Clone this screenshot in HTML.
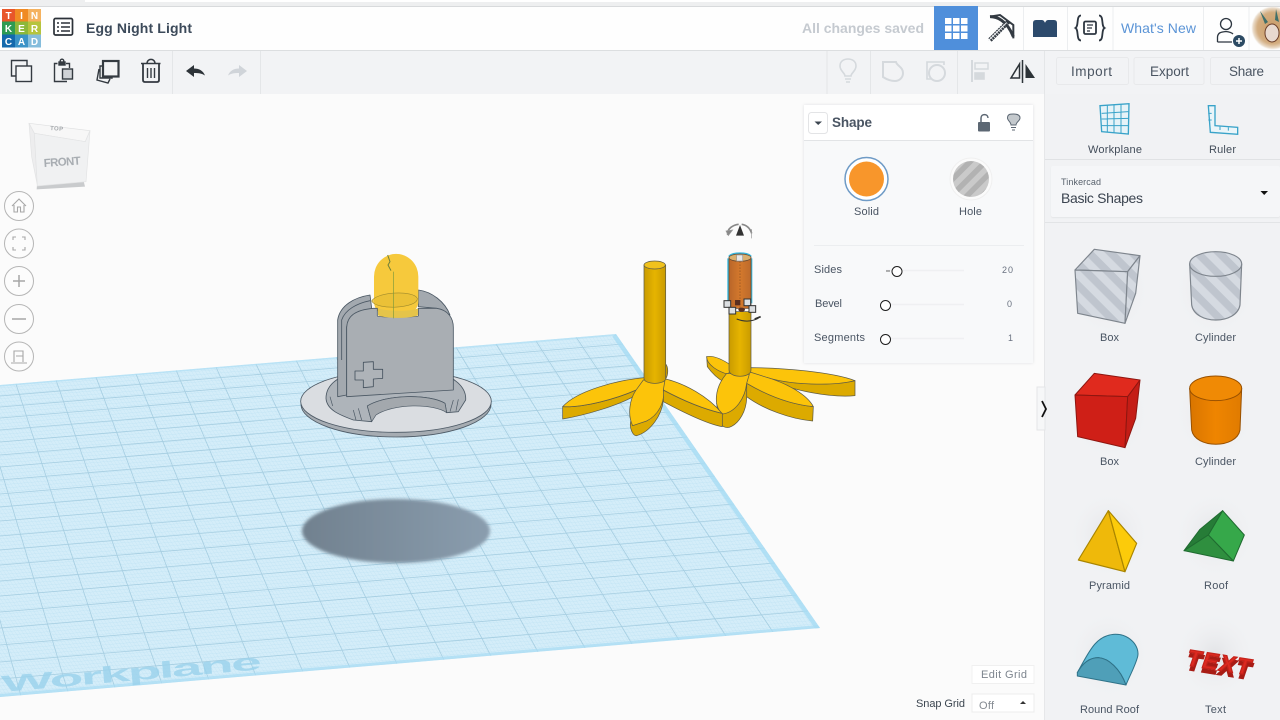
<!DOCTYPE html>
<html>
<head>
<meta charset="utf-8">
<title>Egg Night Light</title>
<style>
html,body{margin:0;padding:0;width:1280px;height:720px;overflow:hidden;background:#fbfbfb}
svg{position:absolute;left:0;top:0;display:block}
text{font-family:"Liberation Sans",sans-serif;fill:#4a5563;font-size:12px}
</style>
</head>
<body>
<svg width="1280" height="720" viewBox="0 0 1280 720" xmlns="http://www.w3.org/2000/svg">
<defs>
<pattern id="mesh" width="3.4" height="3.4" patternUnits="userSpaceOnUse" patternTransform="matrix(1 -0.085 0.66 1 0 0)">
<rect width="3.4" height="3.4" fill="#d4edf9"/>
<path d="M0 0H3.4M0 0V3.4" stroke="#bde1f3" stroke-width=".6"/>
</pattern>
<pattern id="stripe" width="46" height="46" patternUnits="userSpaceOnUse" patternTransform="rotate(-45)">
<rect width="46" height="46" fill="#bfc5ce"/>
<rect width="23" height="46" fill="#d5dae1"/>
</pattern>
<pattern id="stripe2" width="11" height="11" patternUnits="userSpaceOnUse" patternTransform="rotate(45)">
<rect width="11" height="11" fill="#b2b2b2"/>
<rect width="5.500" height="11" fill="#cacaca"/>
</pattern>
<clipPath id="wp"><polygon points="0,385 616,334 820,628 0,697"/></clipPath>
<linearGradient id="stem" x1="0" x2="1" y1="0" y2="0"><stop offset="0" stop-color="#c99b00"/><stop offset=".5" stop-color="#e6b400"/><stop offset="1" stop-color="#c99b00"/></linearGradient>
<linearGradient id="orange" x1="0" x2="1" y1="0" y2="0"><stop offset="0" stop-color="#b9662a"/><stop offset=".5" stop-color="#d4792c"/><stop offset="1" stop-color="#bd6a2c"/></linearGradient>
<linearGradient id="cylg" x1="0" x2="1" y1="0" y2="0"><stop offset="0" stop-color="#d97500"/><stop offset=".5" stop-color="#ef8500"/><stop offset="1" stop-color="#e07b00"/></linearGradient>
<radialGradient id="halo"><stop offset="0" stop-color="#e2e3e6"/><stop offset="1" stop-color="#f1f2f4" stop-opacity="0"/></radialGradient>
<linearGradient id="shad" x1="0" x2="1" y1="0" y2="0"><stop offset="0" stop-color="#71818f"/><stop offset="1" stop-color="#8a9dae"/></linearGradient>
<radialGradient id="ava"><stop offset="0" stop-color="#c99c68"/><stop offset=".75" stop-color="#d3ad80"/><stop offset="1" stop-color="#efe6da"/></radialGradient>
<filter id="b1"><feGaussianBlur stdDeviation=".5"/></filter>
<filter id="b2"><feGaussianBlur stdDeviation="1.5"/></filter>
</defs>

<rect width="1280" height="720" fill="#fbfbfb"/>

<!-- workplane -->
<polygon points="0,385 616,334 820,628 0,697" fill="url(#mesh)"/>
<g clip-path="url(#wp)" stroke="#9cc7dc" stroke-width=".8" fill="none" opacity=".8">
<path d="M576 337L773 632M536 341L726 636M496 344L679 640M456 347L632 644M416 351L585 648M376 354L538 652M336 357L491 656M296 360L444 660M256 364L397 664M216 367L350 668M176 370L303 672M136 374L256 676M96 377L209 680M56 380L162 684M16 384L115 688M-24 387L68 692M-64 390L21 696M-104 394L-26 700"/>
<path d="M0 396L623 344M0 407L630 355M0 418L638 365M0 430L646 377M0 442L653 388M0 455L662 400M0 467L670 412M0 480L678 424M0 494L687 437M0 507L696 449M0 521L705 463M0 536L715 476M0 550L724 490M0 565L734 504M0 581L744 518M0 596L754 533M0 612L765 548M0 628L775 563M0 645L786 579M0 662L797 595M0 679L808 611"/>
</g>
<g clip-path="url(#wp)" fill="none" stroke="#a8dcf4">
<path d="M616 334L820 628" stroke-width="9" opacity=".8"/>
<path d="M0 697L820 628" stroke-width="6" opacity=".7"/>
<path d="M0 385L616 334" stroke-width="3" opacity=".6"/>
</g>
<text transform="translate(2,692) rotate(-5) scale(2.750,1.150)" textLength="95" style="font-size:20px;font-weight:bold;fill:#9ad2ec;opacity:.8">Workplane</text>

<!-- shadow -->
<ellipse cx="396" cy="531" rx="94" ry="32" fill="url(#shad)" filter="url(#b2)"/>

<!-- egg base object -->
<g transform="translate(290,240) scale(.33333)" stroke-linejoin="round">
<ellipse cx="318" cy="493" rx="285" ry="98" fill="#a6acb2" stroke="#4d5a66" stroke-width="2.500"/>
<ellipse cx="318" cy="484" rx="286" ry="93" fill="#dadde1" stroke="#4d5a66" stroke-width="2.500"/>
<path d="M108 475C108 435 140 410 200 395L440 395C490 410 530 440 527 480L505 515L470 518L465 490C420 462 290 462 232 498L245 545L190 540C150 525 110 510 108 475Z" fill="#aeb4ba" stroke="#4a5763" stroke-width="2.500"/>
<path d="M232 498C290 462 420 462 465 490L470 518C430 490 310 490 258 525L245 545Z" fill="#a3a8ad" stroke="#4a5763" stroke-width="2"/>
<path d="M190 510L198 540M205 505L215 540M120 470L128 498M490 480L480 515M505 478L498 512" stroke="#4a5763" stroke-width="2"/>
<!-- back panels -->
<path d="M143 470L143 240C150 195 195 172 240 165L245 205L200 230L170 260L170 465Z" fill="#a3a9af" stroke="#4a5763" stroke-width="2.500"/>
<path d="M155 360L155 240C165 210 200 190 240 182" fill="none" stroke="#4a5763" stroke-width="2.500"/>
<path d="M385 150C425 155 465 185 480 225L440 205L385 200Z" fill="#a3a9af" stroke="#4a5763" stroke-width="2.500"/>
<!-- bulb -->
<path d="M252 185V110A66 68 0 0 1 385 110V185C385 215 350 232 315 232C280 232 252 215 252 185Z" fill="#f6c93c"/>
<!-- front -->
<path d="M170 470L170 262C172 228 195 210 250 205L262 205L262 228C262 232 385 232 385 228L385 205L440 205C475 210 490 235 490 262L490 450Z" fill="#a9aeb3" stroke="#4a5763" stroke-width="2.500"/>
<path d="M264 205V226C290 236 360 236 384 226V205C360 215 295 215 264 205Z" fill="#e5c44a"/>
<path d="M245 183C260 155 370 150 382 175C385 205 260 212 245 183Z" fill="#e8bf36" fill-opacity=".8" stroke="#9e8a2c" stroke-width="1.800"/>
<path d="M310 95V235" stroke="#7e9a3c" stroke-width="2"/>
<path d="M293 45L300 65L294 75L303 92" fill="none" stroke="#6f7f3a" stroke-width="3"/>
<path d="M220 367L250 365L250 388L278 388L278 415L250 417L250 440L220 443L220 420L195 420L195 393L220 393Z" fill="#aeb3b8" stroke="#44515d" stroke-width="2.500"/>
</g>

<!-- flowers -->
<g transform="translate(550,215) scale(.33333)" stroke="#5f5c46" stroke-width="2.200" stroke-linejoin="round">
<!-- flower 2 -->
<path d="M470 425L472 455C490 480 510 495 525 502L535 478C510 470 470 450 470 425Z" fill="#dcaa00"/>
<path d="M470 425C490 420 520 435 545 452L535 478C505 470 470 450 470 425Z" fill="#fcc40a"/>
<path d="M650 487C720 510 850 512 915 497L915 542C850 548 720 530 650 487Z" fill="#dcaa00"/>
<path d="M600 458C700 458 850 472 915 497C850 514 720 510 650 487L600 485Z" fill="#fcc40a"/>
<path d="M590 505L590 545C640 582 720 612 788 618L790 575C720 568 650 540 590 505Z" fill="#dcaa00"/>
<path d="M590 468L650 487C712 505 772 540 790 575C720 568 650 540 590 505Z" fill="#fcc40a"/>
<path d="M500 565L505 610C510 637 530 642 545 634C568 622 588 590 590 550V505C585 550 555 590 518 595Z" fill="#dcaa00"/>
<path d="M530 475L598 478L590 505C585 552 555 592 518 597C490 575 492 520 530 475Z" fill="#fcc40a"/>
<path d="M537 290V465C537 490 603 490 603 465V290Z" fill="url(#stem)"/>
<!-- orange top with glow -->
<path d="M535 130V265M604 130V265M537 125C545 112 595 112 603 125" fill="none" stroke="#35b7dd" stroke-width="6"/>
<path d="M537 128V280H603V128Z" fill="url(#orange)" stroke="#6a4a30"/>
<ellipse cx="570" cy="128" rx="33" ry="11" fill="#d9b070" stroke="#6a4a30"/>
<path d="M570 130V280" stroke="#8a4e20" stroke-width="2" stroke-dasharray="5 4"/>
<!-- flower 1 -->
<path d="M345 445C356 455 356 480 345 495Z" fill="#c99b00"/>
<path d="M38 575L38 612C110 600 200 572 250 545L265 522C200 552 100 578 38 575Z" fill="#dcaa00"/>
<path d="M38 575C80 528 200 495 285 488L290 510L265 522C200 552 100 578 38 575Z" fill="#fcc40a"/>
<path d="M340 525V560C400 592 470 627 517 635V595C460 582 400 557 340 525Z" fill="#dcaa00"/>
<path d="M340 490C405 505 475 545 516 595C460 582 400 557 340 525Z" fill="#fcc40a"/>
<path d="M243 615C236 640 250 664 260 662C302 650 336 600 340 555L337 530C330 580 300 615 250 630Z" fill="#dcaa00"/>
<path d="M280 495L345 495L340 525C345 562 325 600 290 618L248 632C232 600 238 550 262 520Z" fill="#fcc40a"/>
<path d="M282 150V490C282 510 347 510 347 490V150Z" fill="url(#stem)"/>
<ellipse cx="314" cy="150" rx="32" ry="12" fill="#f1c21c"/>
</g>

<!-- selection handles -->
<g transform="translate(550,215) scale(.33333)">
<g fill="#dcdfe2" stroke="#333" stroke-width="3">
<rect x="560" y="120" width="18" height="18" fill="#e8e8e8" stroke="#999" stroke-width="2"/>
<rect x="522" y="257" width="20" height="20"/>
<rect x="582" y="252" width="20" height="20"/>
<rect x="537" y="277" width="20" height="20"/>
<rect x="597" y="272" width="20" height="20"/>
</g>
<rect x="555" y="255" width="16" height="16" fill="#5a2f20"/>
<ellipse cx="575" cy="284" rx="10" ry="6" fill="#5a2f20"/>
<path d="M560 312C585 322 605 320 625 310" fill="none" stroke="#333" stroke-width="3"/>
<path d="M614 312L632 305" stroke="#333" stroke-width="5"/>
<path d="M570 30L582 62H558Z" fill="#333"/>
<path d="M533 60C530 40 550 30 566 28M575 28C590 30 600 40 605 55" fill="none" stroke="#888" stroke-width="5"/>
<path d="M528 48L548 45L535 62ZM605 42V70" fill="#888" stroke="#999" stroke-width="2"/>
</g>

<!-- view cube -->
<g transform="scale(.33333) translate(0,300)">
<path d="M110 268L255 260L250 240H112Z" fill="#c9cbcd" filter="url(#b1)"/>
<path d="M87 70L270 92L256 125L103 100Z" fill="#f7f7f7" stroke="#dfe0e1" stroke-width="2"/>
<path d="M87 70L103 100L112 255L95 170Z" fill="#ededee" stroke="#e2e3e4" stroke-width="2"/>
<path d="M103 100L256 125L270 92L258 245L112 258Z" fill="#f0f1f2" stroke="#e2e3e4" stroke-width="2"/>
</g>
<text transform="translate(44,167) rotate(-4)" textLength="37" style="font-size:11.500px;font-weight:bold;fill:#a8adb2">FRONT</text>
<text transform="translate(50,130) rotate(4)" textLength="13" style="font-size:6px;font-weight:bold;fill:#a5a9ad">TOP</text>

<!-- left nav -->
<g fill="#fcfcfc" stroke="#b5b5b5" stroke-width="1">
<circle cx="19" cy="206" r="14.500"/><circle cx="19" cy="243.500" r="14.500"/><circle cx="19" cy="281" r="14.500"/><circle cx="19" cy="319" r="14.500"/><circle cx="19" cy="356.500" r="14.500"/>
</g>
<g fill="none" stroke="#a7a7a7" stroke-width="1.100">
<path d="M12 206L19 199L26 206M14 205V212H17.500V207H20.500V212H24V205"/>
<path d="M13 240V237H16M22 237H25V240M25 247V250H22M16 250H13V247"/>
<path d="M19 275V287M13 281H25" stroke-width="1.500"/>
<path d="M12 319H26" stroke-width="1.500"/>
<path d="M14 362V351H23V362M11 363H27M16 356H23"/>
</g>

<!-- Header -->
<rect x="0" y="0" width="1280" height="7" fill="#eeeff0"/>
<rect x="85" y="0" width="1195" height="2" fill="#ffffff"/>
<rect x="0" y="6" width="1280" height="1" fill="#d8dadc"/>
<rect x="0" y="7" width="1280" height="43" fill="#fefefe"/>
<rect x="0" y="50" width="1280" height="1.500" fill="#dcdee0"/>
<rect x="0" y="51" width="1280" height="43" fill="#f2f3f5"/>

<!-- logo -->
<rect x="2" y="9" width="13" height="12.500" fill="#e8562a"/><rect x="15" y="9" width="13" height="12.500" fill="#f08a23"/><rect x="28" y="9" width="13" height="12.500" fill="#f5b25f"/>
<rect x="2" y="21.500" width="13" height="13" fill="#2e9b53"/><rect x="15" y="21.500" width="13" height="13" fill="#8db83a"/><rect x="28" y="21.500" width="13" height="13" fill="#b6c43d"/>
<rect x="2" y="34.500" width="13" height="13" fill="#1469ac"/><rect x="15" y="34.500" width="13" height="13" fill="#3b93c7"/><rect x="28" y="34.500" width="13" height="13" fill="#85bddc"/>
<text x="8.500" y="19" text-anchor="middle" style="font-size:10px;font-weight:bold;fill:#fff">T</text>
<text x="21.500" y="19" text-anchor="middle" style="font-size:10px;font-weight:bold;fill:#fff">I</text>
<text x="34.500" y="19" text-anchor="middle" style="font-size:10px;font-weight:bold;fill:#fff">N</text>
<text x="8.500" y="32" text-anchor="middle" style="font-size:10px;font-weight:bold;fill:#fff">K</text>
<text x="21.500" y="32" text-anchor="middle" style="font-size:10px;font-weight:bold;fill:#fff">E</text>
<text x="34.500" y="32" text-anchor="middle" style="font-size:10px;font-weight:bold;fill:#fff">R</text>
<text x="8.500" y="45" text-anchor="middle" style="font-size:10px;font-weight:bold;fill:#fff">C</text>
<text x="21.500" y="45" text-anchor="middle" style="font-size:10px;font-weight:bold;fill:#fff">A</text>
<text x="34.500" y="45" text-anchor="middle" style="font-size:10px;font-weight:bold;fill:#fff">D</text>

<!-- list icon -->
<rect x="54" y="18.500" width="18.500" height="16.500" rx="1.500" fill="#fff" stroke="#2b3138" stroke-width="1.700"/>
<path d="M57 23H59M57 27H59M57 31H59M61 23H70M61 27H70M61 31H70" stroke="#2b3138" stroke-width="1.600"/>
<text x="86" y="33" textLength="106" style="font-size:14px;font-weight:bold;fill:#3c4a5a">Egg Night Light</text>

<text x="802" y="33" textLength="122" style="font-size:14px;font-weight:bold;fill:#c5cad0">All changes saved</text>
<rect x="934" y="6" width="44" height="44" fill="#4f8fdb"/>
<g fill="#fff">
<rect x="945" y="18" width="6.500" height="6"/><rect x="953" y="18" width="6.500" height="6"/><rect x="961" y="18" width="6.500" height="6"/>
<rect x="945" y="25.500" width="6.500" height="6"/><rect x="953" y="25.500" width="6.500" height="6"/><rect x="961" y="25.500" width="6.500" height="6"/>
<rect x="945" y="33" width="6.500" height="6"/><rect x="953" y="33" width="6.500" height="6"/><rect x="961" y="33" width="6.500" height="6"/>
</g>
<!-- pickaxe -->
<g transform="translate(800,0) scale(.33333)" fill="none" stroke="#333a42">
<path d="M570 120L625 65" stroke-width="14" stroke-dasharray="6 2"/>
<path d="M570 50C590 50 620 60 640 110" stroke-width="9"/>
<path d="M570 50L600 45L640 75L640 115" stroke-width="6"/>
<path d="M565 122L620 68" stroke="#eef0f2" stroke-width="3"/>
</g>
<!-- brick -->
<path d="M1033 37V23Q1033 20 1036 20H1042Q1044 20 1045 23Q1046 20 1048 20H1054Q1057 20 1057 23V37Z" fill="#2c4a6c"/>
<path d="M1043 22.500H1047V24H1043Z" fill="#2c4a6c"/>
<!-- code -->
<g fill="none" stroke="#2d3640" stroke-width="1.800">
<path d="M1081 15.500C1076 15.500 1079 26 1075.500 28C1079 30 1076 40.500 1081 40.500"/>
<path d="M1099 15.500C1104 15.500 1101 26 1104.500 28C1101 30 1104 40.500 1099 40.500"/>
<rect x="1084" y="21.500" width="12" height="12.500" rx="1.500"/>
<path d="M1087 25H1093M1087 28H1092M1087 31H1090" stroke-width="1.200"/>
</g>
<text x="1121" y="33" textLength="75" style="font-size:14px;fill:#5b94d6">What's New</text>
<!-- person -->
<g fill="none" stroke="#2d3640" stroke-width="1.300">
<circle cx="1226" cy="24" r="5.500"/>
<path d="M1217.500 42V37C1218 32 1222 32 1226 31.500C1230 32 1232 33 1233 34M1217.500 42H1232"/>
</g>
<circle cx="1239" cy="41" r="6" fill="#2c4a63"/>
<path d="M1236 41H1242M1239 38V44" stroke="#fff" stroke-width="1.500"/>
<!-- dividers -->
<path d="M1023.500 7V50M1067.500 7V50M1113 7V50M1203.500 7V50M1249 7V50" stroke="#eceef0"/>
<!-- avatar -->
<circle cx="1273" cy="28" r="21" fill="url(#ava)" filter="url(#b1)"/>
<path d="M1260 11L1268 22L1265 24ZM1276 9L1275 20L1279 22Z" fill="#3f6f6a"/>
<ellipse cx="1272" cy="33" rx="7" ry="9" fill="#e8d9cf" stroke="#6b3f2a"/>

<!-- Toolbar icons -->
<g fill="none" stroke="#343a41" stroke-width="1.400">
<path d="M16 76H11.500V60.500H27V66"/>
<rect x="16" y="66" width="15.500" height="15.500" fill="#f6f7f8"/>
<path d="M57.500 63.500H54.500V81.500H67M69.500 68V63.500H66"/>
<rect x="59" y="62" width="6" height="3" fill="#343a41"/>
<circle cx="62" cy="61" r="1.800"/>
<rect x="62.500" y="69" width="10" height="10" fill="#cfd2d6"/>
<rect x="103" y="61" width="15.500" height="15.500" stroke-width="2.200"/>
<path d="M103 66H100V78H112V76.500M99 69L97 80L108 83L110 79"/>
<path d="M141 63.500H160.500M147 63.500C147 58 155 58 155 63.500" stroke-width="1.500"/>
<path d="M143 64V80C143 81.500 144 82 145 82H157C158 82 159 81.500 159 80V64" stroke-width="1.800"/>
<path d="M147.500 68V78M151 68V78M154.500 68V78"/>
</g>
<path d="M186 71L194 65V68.500C199 68.500 203 70.500 205 75.500C202 73.500 199 73 194 73V77Z" fill="#2d3338"/>
<path d="M247 71L239 65V68.500C234 68.500 230 70.500 228 75.500C231 73.500 234 73 239 73V77Z" fill="#d0d4d9"/>
<path d="M172.500 51V94M260.500 51V94M827 51V94M870.500 51V94M957.500 51V94M1044.500 51V94" stroke="#e4e6e8"/>

<!-- disabled icons -->
<g fill="none" stroke="#d5d9dd" stroke-width="1.600">
<path d="M845 76C845 73 840 71 840 66C840 61 844 59 848 59C852 59 856 61 856 66C856 71 851 73 851 76ZM845 79H851M846 82H850"/>
<path d="M883 62H896C897 66 903 67 903 73C903 78 899 81 895 81C890 81 886 79 883 77Z" stroke-width="2"/>
<path d="M944 65V62H927V79H931" stroke-width="1.600"/>
<circle cx="937" cy="73" r="8" stroke-width="2"/>
<path d="M972 60V82" stroke-width="2"/>
<rect x="975" y="63" width="13" height="6" stroke-width="1.500"/>
<rect x="975" y="73" width="9" height="6" fill="#d5d9dd"/>
</g>
<path d="M1022.500 60V83" stroke="#2d3338" stroke-width="1.500"/>
<path d="M1019.500 64V78H1011Z" fill="none" stroke="#2d3338" stroke-width="1.500"/>
<path d="M1025.500 64V78H1035Z" fill="#2d3338"/>

<!-- Buttons -->
<g fill="#f2f3f5" stroke="#e8e9eb"><rect x="1056.500" y="57.500" width="72" height="27" rx="2"/><rect x="1134" y="57.500" width="70" height="27" rx="2"/><rect x="1210.500" y="57.500" width="75" height="27" rx="2"/></g>
<text x="1071" y="76" textLength="41" style="font-size:13.500px;fill:#4b5562">Import</text>
<text x="1150" y="76" textLength="39" style="font-size:13.500px;fill:#4b5562">Export</text>
<text x="1229" y="76" textLength="35" style="font-size:13.500px;fill:#4b5562">Share</text>

<!-- right panel -->
<rect x="1045" y="94" width="235" height="626" fill="#f1f2f4"/>
<rect x="1044" y="94" width="1" height="626" fill="#e6e7e9"/>
<rect x="1045" y="159" width="235" height="1" fill="#e0e2e4"/>
<rect x="1051" y="167" width="229" height="51" rx="2" fill="#e4e5e7" filter="url(#b1)"/>
<rect x="1051" y="166" width="229" height="51" rx="2" fill="#f5f6f8"/>
<rect x="1045" y="222" width="235" height="1" fill="#e2e4e6"/>
<!-- workplane icon -->
<g transform="translate(1045,95) scale(.33333)" fill="none" stroke="#39a3c9">
<path d="M165 32L252 26L250 117L170 110Z" fill="#e6f3f8" stroke-width="4"/>
<path d="M170 55L250 50M170 72L250 70M170 92L250 92M187 30V112M207 30V113M228 28V115" stroke-width="3"/>
<path d="M490 32H510V92L578 97V118L496 112Z" fill="#eaf5f9" stroke-width="4"/>
<path d="M490 55H500M490 75H500M525 95V105M550 97V107" stroke-width="3"/>
</g>
<text x="1088" y="153" textLength="54" style="font-size:11px;fill:#434d5a">Workplane</text>
<text x="1209" y="153" textLength="27" style="font-size:11px;fill:#434d5a">Ruler</text>
<text x="1061" y="185" textLength="40" style="font-size:9px;fill:#59626d">Tinkercad</text>
<text x="1061" y="203" textLength="82" style="font-size:14px;fill:#3b4450">Basic Shapes</text>
<path d="M1260.500 191H1268L1264.200 195Z" fill="#111"/>

<!-- halos -->
<g fill="url(#halo)">
<ellipse cx="1109" cy="290" rx="42" ry="48"/><ellipse cx="1215" cy="290" rx="42" ry="48"/>
<ellipse cx="1109" cy="414" rx="42" ry="48"/><ellipse cx="1215" cy="414" rx="42" ry="48"/>
<ellipse cx="1109" cy="535" rx="42" ry="45"/><ellipse cx="1215" cy="535" rx="42" ry="45"/>
<ellipse cx="1109" cy="655" rx="42" ry="45"/><ellipse cx="1215" cy="655" rx="42" ry="45"/>
</g>

<!-- sidebar shapes -->
<g transform="translate(1045,95) scale(.33333)" stroke-linejoin="round">
<g stroke="#7e858d" stroke-width="3.500">
<path d="M148 463L285 482L248 530L90 525Z" fill="url(#stripe)"/>
<path d="M90 525L248 530L240 685L98 655Z" fill="url(#stripe)"/>
<path d="M285 482L272 595L240 685L248 530Z" fill="url(#stripe)"/>
<path d="M434 507L440 630C450 690 575 690 585 630L590 507Z" fill="url(#stripe)"/>
<ellipse cx="512" cy="507" rx="78" ry="37" fill="url(#stripe)"/>
</g>
<g stroke="#8e1610" stroke-width="3">
<path d="M148 835L285 855L248 905L90 900Z" fill="#e02a1e"/>
<path d="M90 900L248 905L240 1058L98 1025Z" fill="#cf1f17"/>
<path d="M285 855L272 970L240 1058L248 905Z" fill="#c41d16"/>
</g>
<g stroke="#985000" stroke-width="3">
<path d="M434 880L440 1005C450 1062 575 1062 585 1005L590 880Z" fill="url(#cylg)"/>
<ellipse cx="512" cy="880" rx="78" ry="37" fill="#f08a05"/>
</g>
</g>
<g transform="translate(1045,480) scale(.33333)" stroke-linejoin="round">
<g stroke="#a98500" stroke-width="3.500">
<path d="M190 92L100 240L240 275Z" fill="#efb90a"/>
<path d="M190 92L240 275L275 190Z" fill="#fccb0a"/>
</g>
<g stroke="#1f6b30" stroke-width="3">
<path d="M533 92L598 165L565 243L490 165Z" fill="#36a84a"/>
<path d="M533 92L490 165L417 212L465 148Z" fill="#267c37"/>
<path d="M490 165L565 243L417 212Z" fill="#2f8f3f"/>
</g>
<g stroke="#2f7288" stroke-width="3">
<path d="M97 578C130 520 150 468 205 463C255 460 285 500 278 530C270 560 255 585 243 615C225 565 190 535 160 533C130 533 110 555 97 578Z" fill="#5fbbd7"/>
<path d="M97 578C110 555 130 533 160 533C190 535 225 565 243 615L97 588Z" fill="#4f9fb8"/>
</g>
</g>
<text transform="translate(1185,669) rotate(9) skewX(-10)" textLength="64" style="font-size:23px;font-weight:bold;fill:#a81c15;stroke:#a81c15;stroke-width:2">TEXT</text>
<text transform="translate(1185,665) rotate(9) skewX(-10)" textLength="64" style="font-size:23px;font-weight:bold;fill:#dc2a20;stroke:#c4221a;stroke-width:1.200">TEXT</text>

<text x="1100" y="341" textLength="19" style="font-size:11px">Box</text>
<text x="1195" y="341" textLength="41" style="font-size:11px">Cylinder</text>
<text x="1100" y="465" textLength="19" style="font-size:11px">Box</text>
<text x="1195" y="465" textLength="41" style="font-size:11px">Cylinder</text>
<text x="1089" y="589" textLength="41" style="font-size:11px">Pyramid</text>
<text x="1204" y="589" textLength="24" style="font-size:11px">Roof</text>
<text x="1080" y="713" textLength="59" style="font-size:11px">Round Roof</text>
<text x="1205" y="713" textLength="21" style="font-size:11px">Text</text>

<!-- collapse tab -->
<path d="M1045 387H1037V430H1045Z" fill="#f6f7f8" stroke="#e4e5e7"/>
<path d="M1042 401L1046 409L1042 417" fill="none" stroke="#111" stroke-width="1.800"/>

<!-- inspector -->
<rect x="804" y="105" width="229" height="258" fill="#dfe0e2" filter="url(#b2)"/>
<rect x="804" y="105" width="229" height="258" fill="#f8f9fa"/>
<rect x="804" y="105" width="229" height="35" fill="#ffffff"/>
<rect x="804" y="140" width="229" height="1" fill="#e2e4e6"/>
<rect x="808.500" y="112.500" width="19" height="21" rx="3" fill="#fff" stroke="#e3e4e6"/>
<path d="M814.500 121.500H822L818.200 125Z" fill="#3c4650"/>
<text x="832" y="127" textLength="40" style="font-size:13.500px;font-weight:bold;fill:#4a5563">Shape</text>
<rect x="978" y="122" width="12" height="9.500" rx="1" fill="#5c6773"/>
<path d="M981 122V118C981 113.500 988 113.500 988 118" fill="none" stroke="#5c6773" stroke-width="1.500"/>
<path d="M1011 125C1011 122 1007.500 120.500 1007.500 118C1007.500 114 1010.500 114 1013.500 114C1017 114 1020 115 1020 118C1020 121 1016 122 1016 125Z" fill="#c4c9cd" stroke="#5c6773"/>
<path d="M1011 127.500H1016M1012 130H1015" stroke="#5c6773"/>
<circle cx="866.500" cy="179" r="21.500" fill="#fff" stroke="#6f9bc6" stroke-width="1.500"/>
<circle cx="866.500" cy="179" r="17.500" fill="#f8962b"/>
<circle cx="971" cy="179" r="21" fill="#fbfbfb" stroke="#f0f0f0"/>
<circle cx="971" cy="179" r="18" fill="url(#stripe2)"/>
<text x="854" y="215" textLength="25" style="font-size:11px">Solid</text>
<text x="959" y="215" textLength="23" style="font-size:11px">Hole</text>
<rect x="814" y="245" width="210" height="1" fill="#eceef0"/>
<text x="814" y="273" textLength="28" style="font-size:11px">Sides</text>
<text x="815" y="307" textLength="27" style="font-size:11px">Bevel</text>
<text x="814" y="341" textLength="51" style="font-size:11px">Segments</text>
<path d="M886 270.500H964M886 304.500H964M886 338.500H964" stroke="#eff0f2" stroke-width="1.500"/>
<path d="M886 271H890" stroke="#666"/>
<g fill="#fff" stroke="#1d1d1d" stroke-width="1">
<circle cx="897" cy="271.500" r="5"/><circle cx="885.500" cy="305.500" r="5"/><circle cx="885.500" cy="339.500" r="5"/>
</g>
<text x="1002" y="273" textLength="11" style="font-size:9px;fill:#6a7280">20</text>
<text x="1007" y="307" style="font-size:9px;fill:#6a7280">0</text>
<text x="1008" y="341" style="font-size:9px;fill:#6a7280">1</text>

<!-- bottom right -->
<rect x="972" y="665.500" width="62" height="18" fill="#fff" stroke="#f0f0f0"/>
<text x="981" y="678" textLength="46" style="font-size:11px;fill:#7d858e">Edit Grid</text>
<text x="916" y="707" textLength="49" style="font-size:11px;fill:#3c4650">Snap Grid</text>
<rect x="972" y="694" width="62" height="18" fill="#fff" stroke="#ececec"/>
<text x="979" y="709" textLength="15" style="font-size:11px;fill:#858b92">Off</text>
<path d="M1020 704H1026L1023 701Z" fill="#333"/>
</svg>
</body>
</html>
